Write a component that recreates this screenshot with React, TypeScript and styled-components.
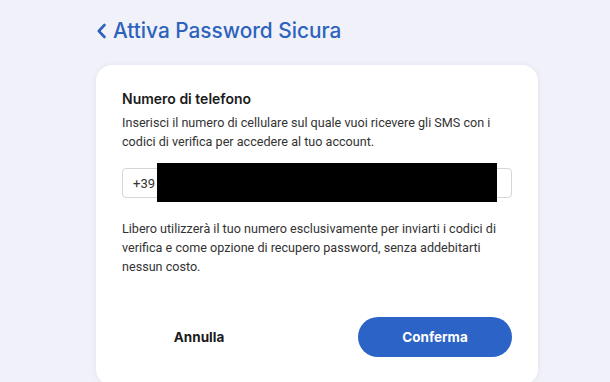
import React from "react";
import styled, { createGlobalStyle } from "styled-components";

const Global = createGlobalStyle`
  html, body { margin: 0; padding: 0; background: #f1f2f9; }
  body { font-family: Inter, "Noto Sans", sans-serif; -webkit-font-smoothing: antialiased; }
`;

const Page = styled.div`
  width: 610px;
  height: 382px;
  overflow: hidden;
  background: #f1f2f9;
  padding: 0 72px 0 96px;
  box-sizing: border-box;
  display: flex;
  flex-direction: column;
`;

const Header = styled.div`
  height: 65px;
  flex-shrink: 0;
  display: flex;
  align-items: center;
  gap: 6px;
  padding-bottom: 4px;
  box-sizing: border-box;
  color: #2d63bd;
`;

const Title = styled.h1`
  margin: 0;
  font-size: 20.8px;
  font-weight: 500;
  color: #2d63bd;
`;

const Card = styled.div`
  flex-shrink: 0;
  background: #fff;
  border-radius: 16px;
  box-shadow: 0 0 6px rgba(40, 50, 110, 0.08);
  padding: 25px 26px 28px 26px;
  display: flex;
  flex-direction: column;
  height: 320px;
  box-sizing: border-box;
`;

const Label = styled.h2`
  margin: 0 0 5px;
  font-size: 14px;
  font-weight: 600;
  color: #1b1b1b;
  line-height: 18px;
`;

const Text = styled.p<{ $mb?: number }>`
  margin: 0 0 ${(p) => p.$mb ?? 0}px;
  font-family: Roboto, Inter, sans-serif;
  font-size: 12.6px;
  line-height: 19px;
  color: #333;
`;

const InputBox = styled.div`
  position: relative;
  height: 30px;
  flex-shrink: 0;
  border: 1px solid #d6d6d6;
  border-radius: 4px;
  display: flex;
  align-items: center;
  padding-left: 10px;
  box-sizing: border-box;
  font-family: Roboto, Inter, sans-serif;
  font-size: 13px;
  color: #333;
  margin: 0 0 21px;
`;

const Redact = styled.div`
  position: absolute;
  left: 34px;
  top: -6px;
  width: 340px;
  height: 39px;
  background: #000;
`;

const Actions = styled.div`
  margin-top: auto;
  display: flex;
  justify-content: space-between;
`;

const Button = styled.button<{ $primary?: boolean }>`
  width: 154px;
  height: 40px;
  border-radius: 20px;
  border: none;
  font-family: Inter, sans-serif;
  font-size: 13.5px;
  font-weight: 700;
  cursor: pointer;
  background: ${(p) => (p.$primary ? "#2b63c6" : "transparent")};
  color: ${(p) => (p.$primary ? "#fff" : "#1b1b1b")};
`;

export default function App() {
  return (
    <>
      <Global />
      <Page>
        <Header>
          <svg width="11" height="16" viewBox="0 0 11 16">
            <path d="M8.5 2 L2.8 8 L8.5 14" fill="none" stroke="#2d63bd" strokeWidth="2.6" strokeLinecap="round" strokeLinejoin="round" />
          </svg>
          <Title>Attiva Password Sicura</Title>
        </Header>
        <Card>
          <Label>Numero di telefono</Label>
          <Text $mb={17}>
            Inserisci il numero di cellulare sul quale vuoi ricevere gli SMS con i codici di verifica per accedere al tuo account.
          </Text>
          <InputBox>
            +39
            <Redact />
          </InputBox>
          <Text>
            Libero utilizzerà il tuo numero esclusivamente per inviarti i codici di verifica e come opzione di recupero password, senza addebitarti nessun costo.
          </Text>
          <Actions>
            <Button>Annulla</Button>
            <Button $primary>Conferma</Button>
          </Actions>
        </Card>
      </Page>
    </>
  );
}
